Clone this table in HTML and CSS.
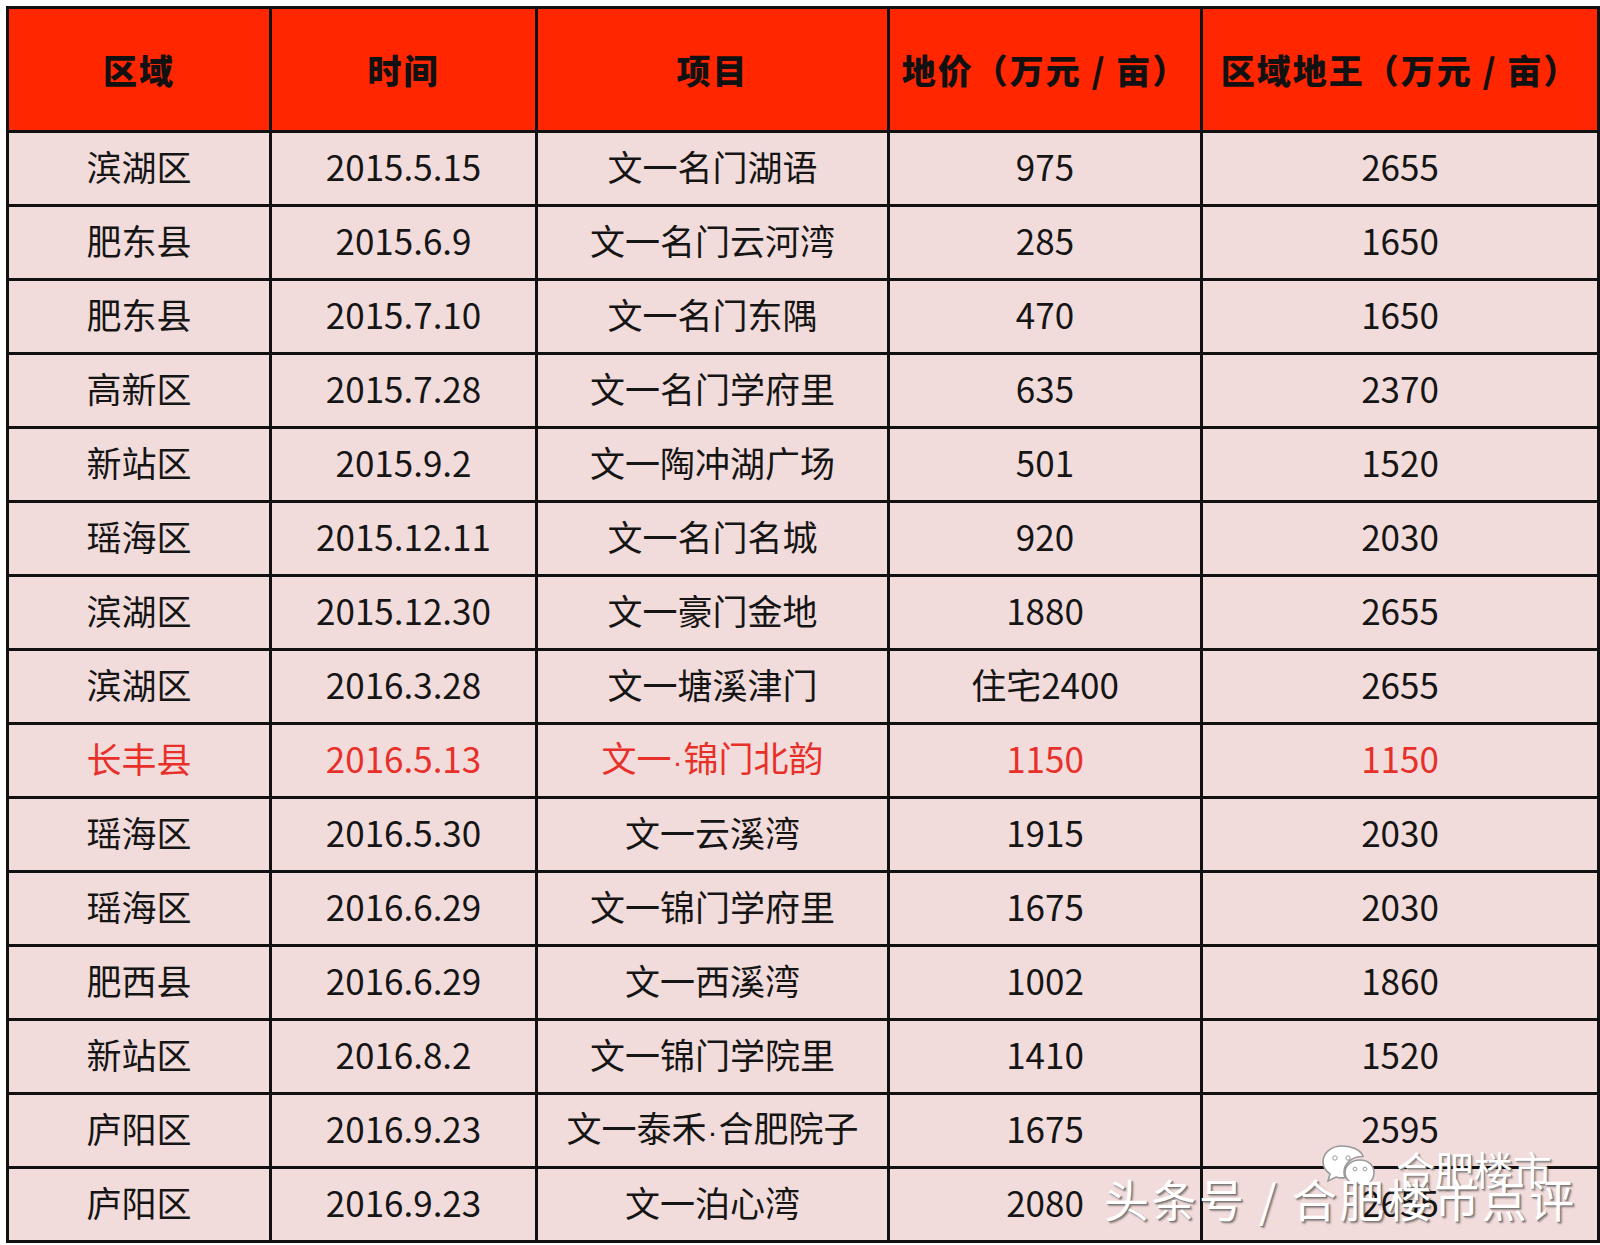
FILE: index.html
```html
<!DOCTYPE html>
<html lang="zh-CN">
<head>
<meta charset="utf-8">
<title>文一地块</title>
<link rel="stylesheet" href="styles.css">
</head>
<body>
<div class="sheet">
  <table class="grid">
    <colgroup>
      <col class="c1"><col class="c2"><col class="c3"><col class="c4"><col class="c5">
    </colgroup>
    <thead>
      <tr class="head">
        <th>区域</th><th>时间</th><th>项目</th><th>地价（万元 / 亩）</th><th>区域地王（万元 / 亩）</th>
      </tr>
    </thead>
    <tbody>
      <tr><td>滨湖区</td><td>2015.5.15</td><td>文一名门湖语</td><td>975</td><td>2655</td></tr>
      <tr><td>肥东县</td><td>2015.6.9</td><td>文一名门云河湾</td><td>285</td><td>1650</td></tr>
      <tr><td>肥东县</td><td>2015.7.10</td><td>文一名门东隅</td><td>470</td><td>1650</td></tr>
      <tr><td>高新区</td><td>2015.7.28</td><td>文一名门学府里</td><td>635</td><td>2370</td></tr>
      <tr><td>新站区</td><td>2015.9.2</td><td>文一陶冲湖广场</td><td>501</td><td>1520</td></tr>
      <tr><td>瑶海区</td><td>2015.12.11</td><td>文一名门名城</td><td>920</td><td>2030</td></tr>
      <tr><td>滨湖区</td><td>2015.12.30</td><td>文一豪门金地</td><td>1880</td><td>2655</td></tr>
      <tr><td>滨湖区</td><td>2016.3.28</td><td>文一塘溪津门</td><td>住宅2400</td><td>2655</td></tr>
      <tr class="hot"><td>长丰县</td><td>2016.5.13</td><td>文一<span class="dot">·</span>锦门北韵</td><td>1150</td><td>1150</td></tr>
      <tr><td>瑶海区</td><td>2016.5.30</td><td>文一云溪湾</td><td>1915</td><td>2030</td></tr>
      <tr><td>瑶海区</td><td>2016.6.29</td><td>文一锦门学府里</td><td>1675</td><td>2030</td></tr>
      <tr><td>肥西县</td><td>2016.6.29</td><td>文一西溪湾</td><td>1002</td><td>1860</td></tr>
      <tr><td>新站区</td><td>2016.8.2</td><td>文一锦门学院里</td><td>1410</td><td>1520</td></tr>
      <tr><td>庐阳区</td><td>2016.9.23</td><td>文一泰禾<span class="dot">·</span>合肥院子</td><td>1675</td><td>2595</td></tr>
      <tr><td>庐阳区</td><td>2016.9.23</td><td>文一泊心湾</td><td>2080</td><td>2655</td></tr>
    </tbody>
  </table>

  <div class="wm-account">
    <svg class="wm-icon" viewBox="0 0 56 50" width="56" height="50" aria-hidden="true">
      <path d="M22 3C11 3 3 10 3 19c0 5 3 9 7 12l-2 7 8-4c2 .6 4 .9 6 .9 1 0 2 0 3-.2-.6-1.7-1-3.4-1-5.2 0-9 8-16 18-16h1C41 7 32 3 22 3z" fill="#fff" stroke="#9a9a9a" stroke-width="1.6"/>
      <circle cx="15" cy="15" r="2.2" fill="#fff" stroke="#999" stroke-width="1"/>
      <circle cx="28" cy="15" r="2.2" fill="#fff" stroke="#999" stroke-width="1"/>
      <path d="M40 17c-8.5 0-15 5.6-15 12.5S31.5 42 40 42c1.7 0 3.3-.2 4.8-.7L51 45l-1.6-5.4C52.2 37.3 54 33.6 54 29.5 54 22.6 48.5 17 40 17z" fill="#fff" stroke="#9a9a9a" stroke-width="1.6"/>
      <circle cx="35" cy="26" r="1.9" fill="#fff" stroke="#999" stroke-width="1"/>
      <circle cx="45" cy="26" r="1.9" fill="#fff" stroke="#999" stroke-width="1"/>
    </svg>
    <span class="wm-name">合肥楼市</span>
  </div>
  <div class="wm-source">头条号 / 合肥楼市点评</div>
</div>
</body>
</html>
```

FILE: styles.css
```css
html, body {
  margin: 0;
  padding: 0;
  background: #ffffff;
}

body {
  font-family: "Noto Sans CJK SC", "Noto Sans", sans-serif;
  color: #111111;
}

.sheet {
  position: relative;
  width: 1600px;
  height: 1245px;
  padding: 6px 0 0 6px;
  box-sizing: border-box;
}

.grid {
  border-collapse: collapse;
  table-layout: fixed;
  width: 1591px;
  background: #f2dcdb;
}

.c1 { width: 263px; }
.c2 { width: 266px; }
.c3 { width: 352px; }
.c4 { width: 313px; }
.c5 { width: 397px; }

.grid th,
.grid td {
  border: 3px solid #111111;
  padding: 0;
  text-align: center;
  vertical-align: middle;
  white-space: nowrap;
  overflow: hidden;
}

.head th {
  height: 121px;
  background: #ff2600;
  font-size: 34px;
  font-weight: 900;
  color: #111111;
  letter-spacing: 2px;
}

.grid td {
  height: 65px;
  font-size: 35px;
  line-height: 1;
  color: #151515;
  padding-bottom: 6px;
}

.dot {
  font-family: "Liberation Sans", sans-serif;
  font-size: 30px;
  padding: 0 1px;
}

.hot td {
  color: #e8302a;
}

.wm-account {
  position: absolute;
  left: 1320px;
  top: 1140px;
  display: flex;
  align-items: center;
  gap: 20px;
}

.wm-icon {
  display: block;
}

.wm-name {
  font-size: 39px;
  color: #ffffff;
  letter-spacing: 0;
  text-shadow: 1px 1px 0 #8a8a8a, 2px 2px 2px rgba(0,0,0,0.35);
}

.wm-source {
  position: absolute;
  left: 1104px;
  top: 1176px;
  font-size: 45px;
  line-height: 1;
  color: #ffffff;
  letter-spacing: 2.5px;
  text-shadow: 1px 1px 0 #7c7c7c, 2px 2px 2px rgba(0,0,0,0.4);
}
```
